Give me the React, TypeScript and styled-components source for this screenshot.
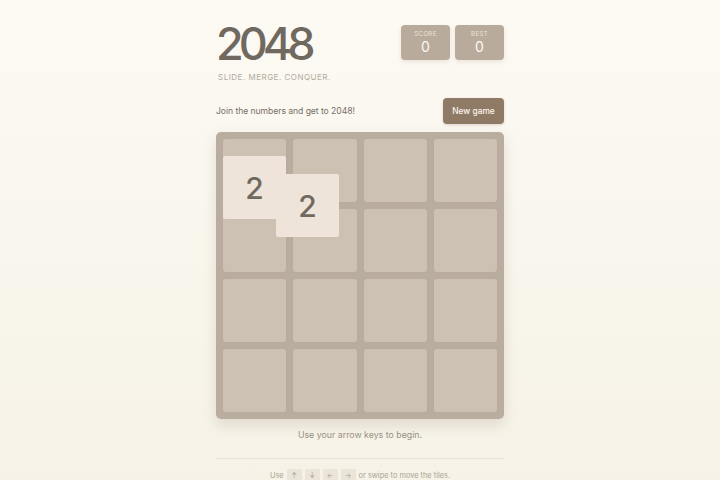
import React from "react";
import styled, { createGlobalStyle } from "styled-components";

const Global = createGlobalStyle`
  html, body { margin: 0; padding: 0; height: 480px; overflow: hidden; }
  body {
    background: linear-gradient(180deg, #fdfaf4 0%, #f6f2e7 100%);
    font-family: Inter, "Liberation Sans", Arial, sans-serif;
    color: #776e65;
  }
`;

const Page = styled.div`
  width: 288px;
  margin: 0 auto;
  padding-top: 25px;
`;

const Header = styled.header`
  display: flex;
  justify-content: space-between;
  align-items: flex-start;
`;

const TitleBlock = styled.div`
  padding-left: 0;
`;

const Title = styled.h1`
  margin: 0;
  font-size: 45px;
  line-height: 38px;
  font-weight: 500;
  letter-spacing: -5px;
  color: #70695f;
`;

const Tagline = styled.div`
  margin-top: 9px;
  padding-left: 2px;
  font-size: 8px;
  line-height: 10px;
  letter-spacing: 0.5px;
  color: #b3aa9d;
`;

const Scores = styled.div`
  display: flex;
  gap: 5px;
`;

const ScoreBox = styled.div`
  width: 49px;
  height: 35px;
  box-sizing: border-box;
  padding-top: 5px;
  border-radius: 4px;
  background: #b8ab9c;
  box-shadow: 0 2px 4px rgba(120, 100, 80, 0.14);
  text-align: center;
  color: #fdf9f2;
`;

const ScoreLabel = styled.div`
  font-size: 6px;
  line-height: 8px;
  letter-spacing: 0.4px;
  color: #ece4d8;
`;

const ScoreValue = styled.div`
  font-size: 14px;
  line-height: 17px;
`;

const Intro = styled.div`
  display: flex;
  justify-content: space-between;
  align-items: center;
  margin-top: 16px;
  height: 26px;
`;

const IntroText = styled.p`
  margin: 0;
  font-size: 8.6px;
  letter-spacing: -0.05px;
  color: #766e63;
`;

const NewGame = styled.button`
  width: 61px;
  height: 26px;
  padding: 0;
  border: none;
  border-radius: 4px;
  background: #8f7a65;
  color: #fbf6ee;
  font-family: inherit;
  font-size: 8.4px;
  font-weight: 500;
  box-shadow: 0 1px 3px rgba(90, 70, 50, 0.2);
`;

const Board = styled.div`
  position: relative;
  margin-top: 8px;
  width: 288px;
  height: 287px;
  box-sizing: border-box;
  padding: 7px;
  display: grid;
  grid-template-columns: repeat(4, 1fr);
  grid-template-rows: repeat(4, 1fr);
  gap: 7px;
  border-radius: 5px;
  background: #b9ad9f;
  box-shadow: 0 6px 14px rgba(120, 100, 80, 0.18);
`;

const Cell = styled.div`
  border-radius: 3px;
  background: #cdc1b3;
  box-shadow: 0 0 2px rgba(185, 173, 159, 0.6);
`;

const Tile = styled.div<{ $x: number; $y: number }>`
  position: absolute;
  left: ${(p) => p.$x}px;
  top: ${(p) => p.$y}px;
  width: 63px;
  height: 63px;
  border-radius: 2px;
  background: #eee4da;
  color: #70695f;
  font-size: 30px;
  font-weight: 500;
  display: flex;
  align-items: center;
  justify-content: center;
`;

const Hint = styled.p`
  margin: 10px 0 0;
  text-align: center;
  font-size: 8.8px;
  line-height: 12px;
  color: #9a9183;
`;

const Divider = styled.hr`
  margin: 17px 0 0;
  border: none;
  border-top: 1px solid #e9e4d8;
`;

const Footer = styled.div`
  margin-top: 10px;
  display: flex;
  justify-content: center;
  align-items: center;
  gap: 3px;
  font-size: 7.4px;
  line-height: 14px;
  color: #aaa294;
`;

const Key = styled.span`
  width: 15px;
  height: 14px;
  border-radius: 2px;
  background: #ebe4d9;
  color: #a89f91;
  font-size: 7px;
  text-align: center;
`;

const cells = Array.from({ length: 16 }, (_, i) => i);

export default function App() {
  return (
    <>
      <Global />
      <Page>
        <Header>
          <TitleBlock>
            <Title>2048</Title>
            <Tagline>SLIDE. MERGE. CONQUER.</Tagline>
          </TitleBlock>
          <Scores>
            <ScoreBox>
              <ScoreLabel>SCORE</ScoreLabel>
              <ScoreValue>0</ScoreValue>
            </ScoreBox>
            <ScoreBox>
              <ScoreLabel>BEST</ScoreLabel>
              <ScoreValue>0</ScoreValue>
            </ScoreBox>
          </Scores>
        </Header>
        <Intro>
          <IntroText>Join the numbers and get to 2048!</IntroText>
          <NewGame>New game</NewGame>
        </Intro>
        <Board>
          {cells.map((c) => (
            <Cell key={c} />
          ))}
          <Tile $x={7} $y={24}>2</Tile>
          <Tile $x={60} $y={42}>2</Tile>
        </Board>
        <Hint>Use your arrow keys to begin.</Hint>
        <Divider />
        <Footer>
          Use <Key>↑</Key> <Key>↓</Key> <Key>←</Key> <Key>→</Key> or swipe to move the tiles.
        </Footer>
      </Page>
    </>
  );
}
